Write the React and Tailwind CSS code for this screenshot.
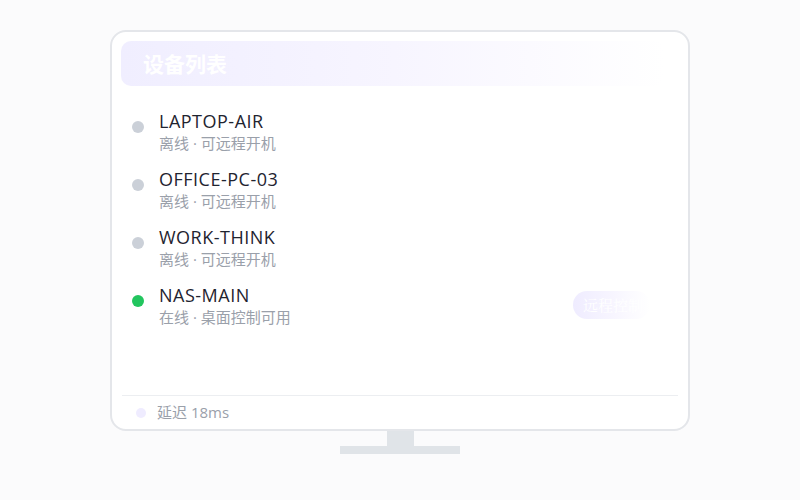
import React from "react";

const devices = [
  { name: "LAPTOP-AIR", status: "离线 · 可远程开机", online: false },
  { name: "OFFICE-PC-03", status: "离线 · 可远程开机", online: false },
  { name: "WORK-THINK", status: "离线 · 可远程开机", online: false },
  { name: "NAS-MAIN", status: "在线 · 桌面控制可用", online: true },
];

function DeviceRow({ device }) {
  return (
    <div className="flex h-[44px] items-center">
      <div className="flex items-start self-stretch">
        <span
          className={
            device.online
              ? "mt-[12px] h-3 w-3 rounded-full bg-[#22c55e]"
              : "mt-[12px] h-3 w-3 rounded-full bg-[#cbd0d8]"
          }
        />
      </div>
      <div className="ml-[15px] flex flex-col">
        <span className="text-[18px] leading-[24px] tracking-[0.5px] text-[#1f2430]">
          {device.name}
        </span>
        <span className="text-[15px] leading-[20px] text-[#9aa0aa]">
          {device.status}
        </span>
      </div>
      {device.online && (
        <button className="ml-auto mr-[29px] h-[28px] rounded-full bg-gradient-to-r from-[#efecff] via-[#f7f5ff] to-white/0 pl-[10px] pr-[7px] font-['Noto_Serif_CJK_SC','Liberation_Serif',serif] text-[15px] text-white">
          远程控制
        </button>
      )}
    </div>
  );
}

export default function App() {
  return (
    <div className="flex min-h-[500px] flex-col items-center bg-[#fbfbfc] pt-[30px] font-['Open_Sans','Noto_Sans_CJK_SC',sans-serif]">
      <div className="flex h-[401px] w-[580px] flex-col rounded-[16px] border-2 border-[#e4e6ea] bg-white px-[9px] pt-[9px]">
        <div className="flex h-[45px] w-[544px] items-center rounded-[10px] bg-gradient-to-r from-[#f0eeff] via-[#f7f5ff] to-white/0 pl-[22px] pt-[3px]">
          <span className="text-[21px] font-bold text-white">设备列表</span>
        </div>
        <div className="flex flex-1 flex-col gap-[14px] pl-[11px] pt-[23px]">
          {devices.map((d) => (
            <DeviceRow key={d.name} device={d} />
          ))}
        </div>
        <div className="mx-px h-px bg-[#eceef1]" />
        <div className="flex h-[33px] items-center pl-[15px]">
          <span className="h-[10px] w-[10px] rounded-full bg-[#efecff]" />
          <span className="ml-[11px] text-[15px] text-[#9aa0aa]">延迟 18ms</span>
        </div>
      </div>
      <div className="h-[15px] w-[27px] bg-[#e0e4e8]" />
      <div className="h-[8px] w-[120px] bg-[#e0e4e8]" />
    </div>
  );
}
